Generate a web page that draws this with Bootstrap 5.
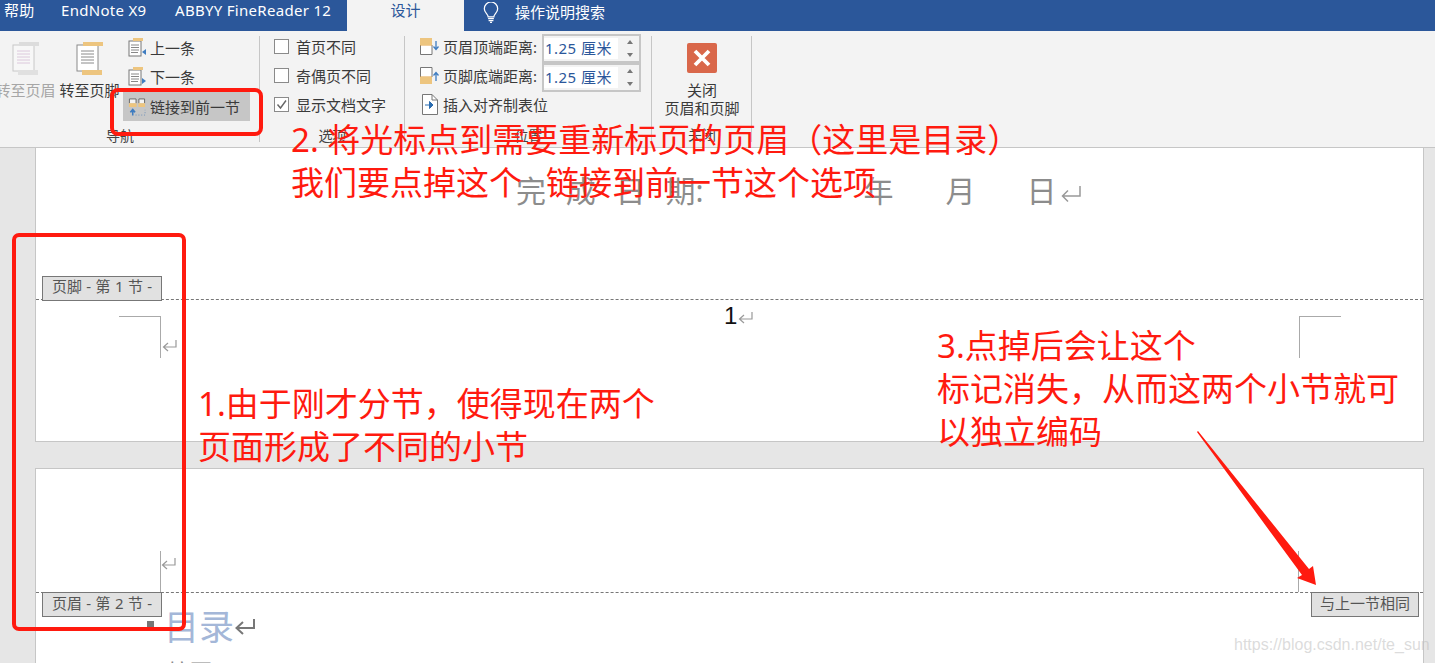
<!doctype html>
<html lang="zh"><head><meta charset="utf-8"><title>页眉和页脚</title>
<link href="https://cdn.jsdelivr.net/npm/bootstrap@5.3.0/dist/css/bootstrap.min.css" rel="stylesheet">
<style>
html,body{height:663px;overflow:hidden}
body{font:15px/20px "Noto Sans","Noto Sans CJK SC",sans-serif;color:#3a3a3a;background:#e6e6e6;position:relative;width:1435px}
.tabbar{height:31px;background:#2b579a;color:#fff}
.tabbar span{white-space:nowrap;line-height:21px;letter-spacing:.3px}
.t-help{margin-left:4px;width:57px}.t-end{width:114px}.t-abb{width:172px}
.tabbar .t-design{width:117px;height:31px;background:#f3f3f3;color:#2b579a;text-align:center;letter-spacing:0}
.bulb{margin:2px 16px 0 19px}
.tabbar .t-tell{line-height:24px;letter-spacing:0}
.ribbon{height:117px;background:#f3f3f3;border-bottom:1px solid #c6c6c6}
.grp{height:111px;padding-top:1px;position:relative;flex:none}
.grp::after{content:"";position:absolute;right:0;top:5px;bottom:0;width:1px;background:#c6c6c6}
.g1{width:260px}.g2{width:145px}.g3{width:247px}.g4{width:100px}
.grplabel{position:absolute;top:95px;left:0;right:0;text-align:center;font-size:14px;color:#444}
.g1 .grplabel{padding-right:20px}
.bigbtn{width:65px;text-align:center;flex:none;white-space:nowrap}
.bigbtn svg{display:block;margin:9px auto 4px}
.off{color:#a6a6a6;margin-left:-7px}
.on{margin-left:-1px}
.smalls{margin-left:1px;padding-top:1px}
.smbtn{width:127px;height:29px;display:flex;align-items:center;padding-left:5px;gap:4px;white-space:nowrap}
.smbtn.hot{background:#c6c6c6;margin-top:1px}
.checks{padding-left:14px}
.ckrow{height:29px;display:flex;align-items:center;gap:7px;white-space:nowrap}
.ckbox{width:15px;height:15px;background:#fff;border:1px solid #8a8a8a;display:block}
.posrow{height:29px;display:flex;align-items:center;white-space:nowrap}
.posrow svg{margin-left:15px;margin-right:4px;flex:none}
.spin{width:99px;height:29px;border:2px solid #c6c6c6;display:flex;background:#f3f3f3;margin:4px 0 0 5px}
.spinval{width:74px;height:21px;margin-top:2px;background:#fff;color:#2b579a;padding-left:1px;line-height:21px;white-space:nowrap;letter-spacing:.45px}
.arrows{flex:1;display:flex;flex-direction:column;align-items:center;justify-content:space-around;padding-left:2px}
.tri-up{border:3px solid transparent;border-top:0;border-bottom:4px solid #777;width:0;height:0}
.tri-dn{border:3px solid transparent;border-bottom:0;border-top:4px solid #777;width:0;height:0}
.closebtn{text-align:center;line-height:18px;padding-top:12px;white-space:nowrap}
.closex{width:30px;height:30px;background:#d9674a;border-radius:2px;display:flex;align-items:center;justify-content:center;margin:0 auto 8px}
.desk{padding:0 11px 0 35px}
.sheet{background:#fff;border:1px solid #c6c6c6;position:relative;overflow:hidden}
.s1{height:294px;border-top:0;margin-bottom:26px}
.s2{height:200px;border-bottom:0}
.dateline{font-size:30px;line-height:40px;color:#8c8c8c;margin-left:480px;padding-top:23px;height:63px;white-space:nowrap;word-spacing:12px;position:relative}
.dashed{border-top:1px dashed #777;position:relative}
.tag{position:absolute;left:6px;width:120px;height:25px;background:#e1e1e1;border:1px solid #777;color:#555;font-size:15px;word-spacing:.5px;text-align:center;white-space:nowrap}
.tag.up{bottom:-1px;line-height:19px}
.tag.dn{top:-1px;line-height:20px}
.tag.rt{left:auto;right:4px;width:108px;word-spacing:0}
.crop-l{width:42px;height:42px;border-top:1px solid #aaa;border-right:1px solid #aaa;margin-left:83px;position:relative;flex:none}
.crop-r{width:42px;height:42px;border-top:1px solid #aaa;border-left:1px solid #aaa;position:relative;flex:none}
.pilcrow{position:absolute}
.pagenum{width:0;margin:-14px 0 0 563px;flex:none;font:24px/28px "Liberation Sans",sans-serif;color:#111;white-space:nowrap}
.vline{width:1px;height:41px;background:#aaa;flex:none}
.gap1{height:82px}
.toc{margin-left:128px;padding-top:11px;font-size:35px;line-height:46px;color:#a4b7d8;display:flex;align-items:center;white-space:nowrap;position:relative}
.anchorsq{position:absolute;width:7px;height:6px;background:#777;left:-17px;top:28px}
.cut{margin-left:132px;font-size:22px;line-height:30px;color:#888;margin-top:6px}
.overlay{position:absolute;left:0;top:0;width:1435px;height:663px;pointer-events:none}
.note{position:absolute;color:#ff1a0f;font-size:33px;line-height:43px;white-space:nowrap}
.n1{left:198px;top:382px}.n2{left:291px;top:118px}.n3{left:937px;top:324px}
.wide-gap{margin-left:24px}
.mark-w{position:absolute;left:1234px;top:634px;font:16px/22px "Liberation Sans",sans-serif;color:rgba(190,190,190,.55);white-space:nowrap}
</style></head><body>
<div class="tabbar d-flex align-items-start">
<span class="t-help">帮助</span><span class="t-end">EndNote X9</span><span class="t-abb">ABBYY FineReader 12</span>
<span class="t-design">设计</span>
<svg class="bulb" width="16" height="21" viewBox="0 0 16 22" fill="none" stroke="#fff" stroke-width="1.3"><path d="M5 15.500C5 12.500 1 11.500 1 7a7 7 0 0 1 14 0c0 4.500-4 5.500-4 8.500z"/><path d="M5 17.500h6M5.500 19.500h5M7 21.300h2"/></svg>
<span class="t-tell">操作说明搜索</span>
</div>
<div class="ribbon d-flex">
<div class="grp g1 d-flex">
 <div class="bigbtn off"><svg width="28" height="35" viewBox="0 0 28 35"><rect x="1" y="4" width="21" height="26" fill="#f7f7f7" stroke="#c8c8c8"/><path d="M5 10h13M5 13h13M5 16h13M5 19h13M5 22h13" stroke="#dcc8dc"/><rect x="7" y="1" width="20" height="4" fill="#dcdcdc"/><rect x="6" y="29" width="20" height="5" fill="#e0e0e0"/></svg>转至页眉</div>
 <div class="bigbtn on"><svg width="28" height="35" viewBox="0 0 28 35"><rect x="1" y="4" width="21" height="26" fill="#fff" stroke="#8a8a8a"/><path d="M5 10h13M5 13h13M5 16h13M5 19h13M5 22h13" stroke="#8a8a8a"/><rect x="7" y="1" width="20" height="4" fill="#edc57f"/><rect x="6" y="29" width="20" height="5" fill="#edc57f"/></svg>转至页脚</div>
 <div class="smalls">
  <div class="smbtn"><svg width="18" height="19" viewBox="0 0 18 19"><rect x="1" y="3" width="12" height="15" fill="#fff" stroke="#777"/><path d="M3 7h8M3 9.500h8M3 12h8M3 14.500h7" stroke="#888"/><rect x="5" y="0" width="10" height="3" fill="#edc57f"/><path d="M18 11v6l-4-3z" fill="#3e7cc0"/></svg>上一条</div>
  <div class="smbtn"><svg width="18" height="19" viewBox="0 0 18 19"><rect x="1" y="3" width="12" height="15" fill="#fff" stroke="#777"/><path d="M3 7h8M3 9.500h8M3 12h8M3 14.500h7" stroke="#888"/><rect x="5" y="0" width="10" height="3" fill="#edc57f"/><path d="M14 11v6l4-3z" fill="#3e7cc0"/></svg>下一条</div>
  <div class="smbtn hot"><svg width="18" height="20" viewBox="0 0 19 20"><path d="M1.500 6V1.500h7V6M11.500 6V1.500h6V6" fill="#f3f3f3" stroke="#666"/><rect x="1" y="6" width="8" height="4" fill="#edc57f"/><rect x="11" y="6" width="7" height="4" fill="#edc57f"/><path d="M5 19v-5M2.500 15.500 5 12.500l2.500 3" stroke="#3e7cc0" stroke-width="1.600" fill="#3e7cc0"/><path d="M8 18.500h10V13" stroke="#6b8fb8" stroke-dasharray="1 2" fill="none"/></svg>链接到前一节</div>
 </div>
 <div class="grplabel">导航</div>
</div>
<div class="grp g2 checks">
 <div class="ckrow"><span class="ckbox"></span>首页不同</div>
 <div class="ckrow"><span class="ckbox"></span>奇偶页不同</div>
 <div class="ckrow"><span class="ckbox"><svg width="13" height="13" viewBox="0 0 13 13" class="d-block"><path d="M2.500 6.500 5.500 10 11 2.500" fill="none" stroke="#666" stroke-width="1.400"/></svg></span>显示文档文字</div>
 <div class="grplabel">选项</div>
</div>
<div class="grp g3">
 <div class="posrow"><svg width="19" height="17" viewBox="0 0 19 17"><rect x="0" y="0" width="12" height="7" fill="#edc57f"/><path d="M.5 7v9.500h11.500V7" fill="#fff" stroke="#777"/><path d="M.5 7.500h11.500" stroke="#e5a040" stroke-dasharray="1 1"/><path d="M16 3v8M13.500 8.500 16 11.500l2.500-3" fill="none" stroke="#3e7cc0" stroke-width="1.300"/></svg>页眉顶端距离:<div class="spin"><div class="spinval">1.25 厘米</div><div class="arrows"><span class="tri-up"></span><span class="tri-dn"></span></div></div></div>
 <div class="posrow"><svg width="19" height="17" viewBox="0 0 19 17"><rect x="0" y="10" width="12" height="7" fill="#edc57f"/><path d="M.5 10V.5h11.500V10" fill="#fff" stroke="#777"/><path d="M.5 9.500h11.500" stroke="#e5a040" stroke-dasharray="1 1"/><path d="M16 14V6M13.500 8.500 16 5.500l2.500 3" fill="none" stroke="#3e7cc0" stroke-width="1.300"/></svg>页脚底端距离:<div class="spin"><div class="spinval">1.25 厘米</div><div class="arrows"><span class="tri-up"></span><span class="tri-dn"></span></div></div></div>
 <div class="posrow"><svg class="ins-ic" width="16" height="21" viewBox="0 0 16 21" style="margin-left:17px;margin-right:5px"><path d="M.5.5h9.500l5.500 5.500v14.500H.5z" fill="#fff" stroke="#777"/><path d="M10 .5V6h5.500" fill="none" stroke="#777"/><path d="M3 11h7M7.500 7.500 11 11l-3.500 3.500z" fill="#2b6cb0" stroke="#2b6cb0"/></svg>插入对齐制表位</div>
 <div class="grplabel">位置</div>
</div>
<div class="grp g4 closebtn">
 <div class="closex"><svg width="20" height="20" viewBox="0 0 20 20"><path d="M3 3l14 14M17 3 3 17" stroke="#fff" stroke-width="3.800"/></svg></div>
 关闭<br>页眉和页脚
 <div class="grplabel">关闭</div>
</div>
</div>
<div class="desk">
 <div class="sheet s1">
  <div class="dateline">完 成 日 期:<span style="margin-left:160px">年</span><span style="margin-left:52px">月</span><span style="margin-left:51px">日</span><svg width="22" height="20" viewBox="0 0 22 20" class="ms-1" fill="none" stroke="#999" stroke-width="1.500"><path d="M20 2v10H3M8 6.500 2.500 12 8 17.500"/></svg></div>
  <div style="height:88px"></div>
  <div class="dashed"><div class="tag up">页脚 - 第 1 节 -</div></div>
  <div class="d-flex mt-3">
   <div class="crop-l"><svg class="pilcrow" style="left:43px;top:21px" width="15" height="15" viewBox="0 0 15 15" fill="none" stroke="#999" stroke-width="1.200"><path d="M14 2v7H2M6 5 1.500 9 6 13"/></svg></div>
   <div class="pagenum">1<svg width="17" height="15" viewBox="0 0 17 15" fill="none" stroke="#999" stroke-width="1.200"><path d="M15 2v7H3M7 5 2.500 9 7 13"/></svg></div>
   <div class="crop-r" style="margin-left:575px"></div>
  </div>
 </div>
 <div class="sheet s2">
  <div class="gap1"></div>
  <div class="d-flex">
   <div class="vline position-relative" style="margin-left:124px"><svg class="pilcrow" style="left:1px;top:5px" width="15" height="15" viewBox="0 0 15 15" fill="none" stroke="#999" stroke-width="1.200"><path d="M14 2v7H2M6 5 1.500 9 6 13"/></svg></div>
   <div class="vline" style="margin-left:1137px"></div>
  </div>
  <div class="dashed"><div class="tag dn">页眉 - 第 2 节 -</div><div class="tag dn rt">与上一节相同</div></div>
  <div class="toc"><span class="anchorsq"></span><span>目录</span><svg width="22" height="20" viewBox="0 0 22 20" fill="none" stroke="#777" stroke-width="2"><path d="M20 2v9H3M9 5 2.500 11 9 17"/></svg></div>
  <div class="cut">摘要</div>
 </div>
</div>
<div class="overlay">
 <svg width="1435" height="663" class="position-absolute top-0 start-0">
  <rect x="112" y="90" width="149" height="44" rx="6" fill="none" stroke="#ff1a0f" stroke-width="4"/>
  <rect x="14" y="235" width="170" height="394" rx="5" fill="none" stroke="#ff1a0f" stroke-width="4"/>
  <polygon points="1197,432 1198,431 1309,569 1313,566 1316,585 1297,578 1302,575" fill="#ff1a0f"/>
 </svg>
 <div class="note n1">1.由于刚才分节，使得现在两个<br>页面形成了不同的小节</div>
 <div class="note n2">2. 将光标点到需要重新标页的页眉（这里是目录）<br>我们要点掉这个<span class="wide-gap">链接到前一节这个选项</span></div>
 <div class="note n3">3.点掉后会让这个<br>标记消失，从而这两个小节就可<br>以独立编码</div>
 <div class="mark-w">https://blog.csdn.net/te_sun</div>
</div>
<script src="https://cdn.jsdelivr.net/npm/bootstrap@5.3.0/dist/js/bootstrap.bundle.min.js"></script>
</body></html>
